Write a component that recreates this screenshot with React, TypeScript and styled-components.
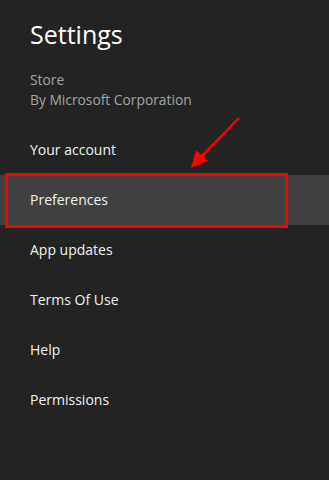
import React from "react";
import styled, { createGlobalStyle } from "styled-components";

const Global = createGlobalStyle`
  html, body { margin: 0; padding: 0; background: #232323; }
  body { font-family: "Open Sans", "Noto Sans", sans-serif; }
`;

const Page = styled.div`
  position: relative;
  width: 329px;
  height: 480px;
  background: #232323;
  color: #ffffff;
  overflow: hidden;
  display: flex;
  flex-direction: column;
`;

const Header = styled.header`
  display: flex;
  flex-direction: column;
  padding: 17px 0 0 30px;
  height: 108px;
  box-sizing: border-box;
`;

const Title = styled.h1`
  margin: 0;
  font-size: 25px;
  font-weight: 400;
  line-height: 34px;
  color: #ffffff;
`;

const Subtitle = styled.div`
  margin-top: 19px;
  font-size: 13.8px;
  line-height: 20px;
  color: #a3a3a3;
`;

const Menu = styled.nav`
  display: flex;
  flex-direction: column;
  margin-top: 17px;
`;

const Item = styled.div<{ $active?: boolean }>`
  height: 50px;
  display: flex;
  align-items: center;
  padding: 0 0 2px 30px;
  box-sizing: border-box;
  font-size: 14px;
  color: #f2f2f2;
  background: ${(p) => (p.$active ? "#404040" : "transparent")};
`;

const Highlight = styled.div`
  position: absolute;
  left: 5px;
  top: 173px;
  width: 283px;
  height: 55px;
  box-sizing: border-box;
  border: 3px solid #ff0000;
`;

const Arrow = styled.svg`
  position: absolute;
  left: 186px;
  top: 114px;
`;

const items = ["Your account", "Preferences", "App updates", "Terms Of Use", "Help", "Permissions"];

export default function App() {
  return (
    <Page>
      <Global />
      <Header>
        <Title>Settings</Title>
        <Subtitle>
          Store
          <br />
          By Microsoft Corporation
        </Subtitle>
      </Header>
      <Menu>
        {items.map((t) => (
          <Item key={t} $active={t === "Preferences"}>
            {t}
          </Item>
        ))}
      </Menu>
      <Highlight />
      <Arrow width="60" height="60" viewBox="0 0 60 60">
        <line x1="53" y1="4" x2="14" y2="44" stroke="#ff0000" strokeWidth="2.5" />
        <polygon points="5,54 10,36 22,47" fill="#ff0000" />
      </Arrow>
    </Page>
  );
}
